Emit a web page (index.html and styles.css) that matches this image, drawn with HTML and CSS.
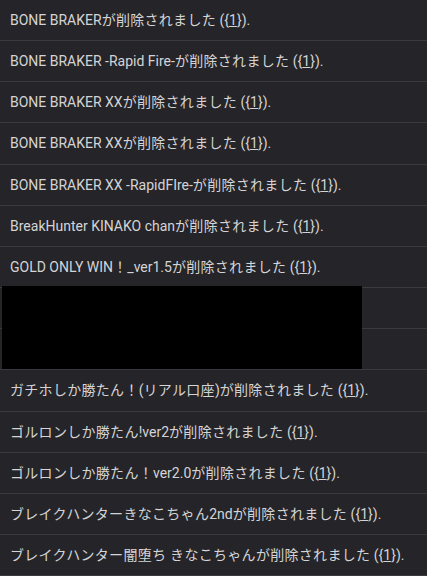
FILE: index.html
```html
<!DOCTYPE html>
<html lang="ja">
<head>
    <meta charset="utf-8">
    <title>削除ログ</title>
    <link rel="stylesheet" href="styles.css">
</head>
<body>
    <div class="log">
        <ul class="log-list">
            <li class="log-item">BONE BRAKER<span class="ja">が削除されました</span> ({<u>1</u>}).</li>
            <li class="log-item">BONE BRAKER -Rapid Fire-<span class="ja">が削除されました</span> ({<u>1</u>}).</li>
            <li class="log-item">BONE BRAKER XX<span class="ja">が削除されました</span> ({<u>1</u>}).</li>
            <li class="log-item">BONE BRAKER XX<span class="ja">が削除されました</span> ({<u>1</u>}).</li>
            <li class="log-item">BONE BRAKER XX -RapidFIre-<span class="ja">が削除されました</span> ({<u>1</u>}).</li>
            <li class="log-item">BreakHunter KINAKO chan<span class="ja">が削除されました</span> ({<u>1</u>}).</li>
            <li class="log-item">GOLD ONLY WIN<span class="ja">！</span>_ver1.5<span class="ja">が削除されました</span> ({<u>1</u>}).</li>
            <li class="log-item"></li>
            <li class="log-item"></li>
            <li class="log-item"><span class="ja">ガチホしか勝たん！</span>(<span class="ja">リアル口座</span>)<span class="ja">が削除されました</span> ({<u>1</u>}).</li>
            <li class="log-item"><span class="ja">ゴルロンしか勝たん</span>!ver2<span class="ja">が削除されました</span> ({<u>1</u>}).</li>
            <li class="log-item"><span class="ja">ゴルロンしか勝たん！</span>ver2.0<span class="ja">が削除されました</span> ({<u>1</u>}).</li>
            <li class="log-item"><span class="ja">ブレイクハンターきなこちゃん</span>2nd<span class="ja">が削除されました</span> ({<u>1</u>}).</li>
            <li class="log-item"><span class="ja">ブレイクハンター闇堕ち きなこちゃんが削除されました</span> ({<u>1</u>}).</li>
        </ul>
        <!-- hidden entries -->
        <div class="redacted"></div>
    </div>
</body>
</html>
```

FILE: styles.css
```css
* {
    margin: 0;
    padding: 0;
    box-sizing: border-box;
}

body {
    background: #252428;
    color: #d4d4d6;
    font-family: Roboto, "Noto Sans CJK JP", sans-serif;
    font-size: 14px;
}

.log {
    position: relative;
    width: 427px;
}

.log-list {
    list-style: none;
}

.log-item {
    height: 41.17px;
    line-height: 40px;
    padding-left: 10px;
    border-bottom: 1px solid #3a393e;
    white-space: nowrap;
}

.log-item .ja {
    letter-spacing: 0.3px;
}

.log-item u {
    text-decoration-color: #d4d4d6;
}

.redacted {
    position: absolute;
    left: 2px;
    top: 286px;
    width: 360px;
    height: 83px;
    background: #000;
}
```
